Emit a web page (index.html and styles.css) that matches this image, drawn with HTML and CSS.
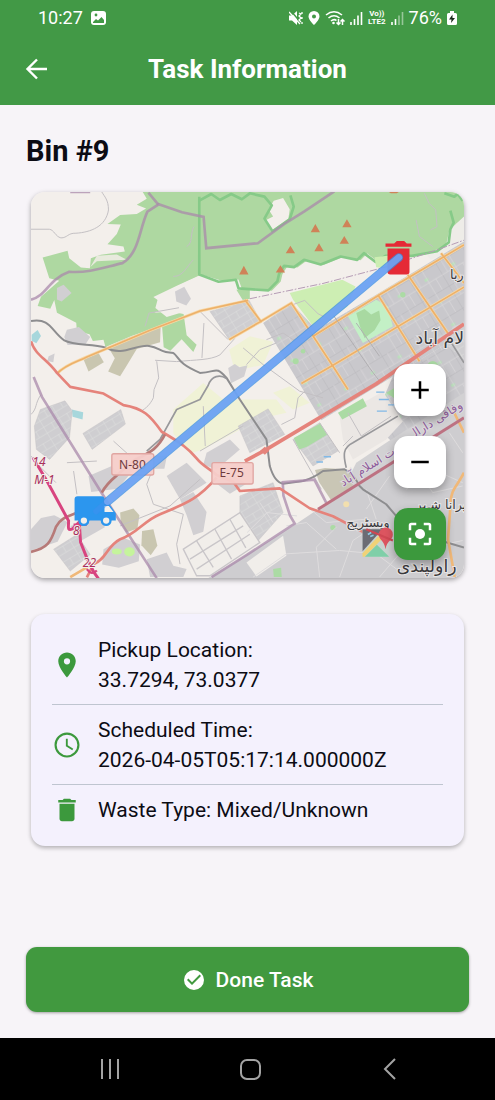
FILE: index.html
```html
<!DOCTYPE html>
<html lang="en">

<head>
    <meta charset="UTF-8">
    <meta name="viewport" content="width=device-width, initial-scale=1.0">
    <title>Task Information</title>
    <link rel="stylesheet" href="styles.css">
</head>

<body>
    <header class="header">
        <div class="status">
            <div class="status__group">
                <span class="status__text">10:27</span>
                <svg class="status__picture" width="15" height="15" viewBox="0 0 15 15">
                    <rect width="15" height="14" rx="3" fill="#fff" />
                    <circle cx="5" cy="4" r="1.4" fill="#429946" />
                    <path d="M2 11l3-3 2 1.5L10.500 6 13 9v3H2z" fill="#429946" />
                </svg>
            </div>
            <div class="status__group status__group--icons">
                <svg width="14" height="14" viewBox="0 0 14 14">
                    <path d="M0 4.500h3L8 0v14L3 9.500H0z" fill="#fff" />
                    <path d="M2 0l11 13" stroke="#429946" stroke-width="1.500" />
                    <path d="M0 1l11 12M10 2l2 1-2 2 2 2-2 2 2 2M13 1v2M13 6v2M13 11v2" fill="none" stroke="#fff" stroke-width="1.300" />
                </svg>
                <svg width="12" height="14" viewBox="0 0 12 14">
                    <path fill="#fff" fill-rule="evenodd" d="M6 0a5.500 5.500 0 0 0-5.500 5.500C.5 9 6 14 6 14s5.500-5 5.500-8.500A5.500 5.500 0 0 0 6 0zm0 3.500a2 2 0 1 1 0 4 2 2 0 0 1 0-4z" />
                </svg>
                <svg width="20" height="16" viewBox="0 0 20 16">
                    <path d="M1 5q8-6.500 16 0M3.500 8q5.500-4.500 11 0M6 11q3-2.500 5.500-.5" fill="none" stroke="#fff" stroke-width="1.600" />
                    <circle cx="8.500" cy="13" r="1.300" fill="#fff" />
                    <path d="M13.500 9v5M11.500 12.500l2 2 2-2M17.500 15v-5M15.500 11.500l2-2 2 2" fill="none" stroke="#fff" stroke-width="1.500" />
                </svg>
                <svg width="13" height="14" viewBox="0 0 13 14">
                    <path d="M1 11v3M4.500 8v6M8 4.500V14M11.500 1v13" stroke="#fff" stroke-width="1.600" />
                </svg>
                <span class="status__lte">Vo))<br>LTE2</span>
                <svg width="13" height="14" viewBox="0 0 13 14">
                    <path d="M1 11v3M4.500 8v6" stroke="#fff" stroke-width="1.600" />
                    <path d="M8 4.500V14M11.500 1v13" stroke="#fff" stroke-opacity=".45" stroke-width="1.600" />
                </svg>
                <span class="status__text">76%</span>
                <svg width="10" height="14" viewBox="0 0 10 14">
                    <path d="M3 0h4v2h1.500A1.500 1.500 0 0 1 10 3.500v9A1.500 1.500 0 0 1 8.500 14h-7A1.500 1.500 0 0 1 0 12.500v-9A1.500 1.500 0 0 1 1.500 2H3z" fill="#fff" />
                    <path d="M5.500 3.500L2 8.500h2.500L4 12l4-5H5.500z" fill="#1c2a1d" />
                </svg>
            </div>
        </div>
        <div class="appbar">
            <button class="appbar__back" type="button" aria-label="Back">
                <svg width="24" height="24" viewBox="0 0 24 24">
                    <path d="M22 12H3M12 2.500L2.500 12l9.500 9.500" fill="none" stroke="#fff" stroke-width="2.400" />
                </svg>
            </button>
            <h1 class="appbar__title">Task Information</h1>
        </div>
    </header>

    <main class="main">
        <h2 class="bin-title">Bin #9</h2>

        <div class="map">
            <svg class="map__canvas" viewBox="32 36 1302 1161" preserveAspectRatio="xMidYMid slice">
                <defs>
                    <pattern id="streets" width="54" height="42" patternUnits="userSpaceOnUse" patternTransform="rotate(-31)">
                        <rect width="54" height="42" fill="#cfced1" />
                        <path d="M0 1h54M1 0v42M28 0v22M0 22h54" fill="none" stroke="#dddbdc" stroke-width="2" />
                    </pattern>
                    <pattern id="sectors" width="94" height="78" patternUnits="userSpaceOnUse" patternTransform="rotate(-31)">
                        <rect width="94" height="78" fill="#c9c8cc" />
                        <rect x="40" y="24" width="12" height="9" fill="#b9dfba" />
                        <path d="M0 1h94M1 0v78" fill="none" stroke="#bbb9bd" stroke-width="2" />
                        <path d="M48 0v78M0 40h94M72 40v38M20 0v40" fill="none" stroke="#d9d7da" stroke-width="2" />
                    </pattern>
                </defs>

                <rect x="30" y="30" width="1310" height="1170" fill="#f3efeb" />

                <!-- fields -->
                <g fill="#f0f2d6">
                    <path d="M628 510l62-40 70 16-30 70-50 10-40-10z" />
                    <path d="M460 690l90-80 60 50 160 0 30 40-80 18-170 92-40 12-50-60z" />
                    <path d="M760 640l50-20 60 50-50 20z" />
                </g>

                <!-- forest and national park -->
                <g fill="#aed8a1">
                    <path d="M368 36l12 20-30 18 28 12-28 16-50 3-38 27 40 2-12 28-28 31 48 7 4 15-72 10-30 10-3 30-27-2-35-28-5-22-75 20 20 62 30 8-55 48-10 28 38 8 12-26 8 38 58 30 2 26 38 9 10 20 32-4 6 22 80-34 90-30 5 65 20 10 34-34 35 38 10-22-30-28-10-70-50 15-34-27 10-38 60-30 70-32 60 18 50-4 10 28 90 6 27-28 5-22 15-24 30 4 30-22 50 14 60-24 50 10 20-20 35 26 30-18 80 0 75-14 35-26 5-40 10-20 38-6V36z" />
                    <path d="M645 330l45 0 0 28-35 4z" />
                </g>
                <path d="M762 62l28-8 20 34-4 28-52 38-18-32 24-12-14-22z" fill="#f3efeb" />
                <path d="M1290 150l44-40v90l-100 40-15-20 60-20z" fill="#eeece8" />
                <path d="M400 352l72-35 66-30 60 18 40-2 12 28 20 32-110 28-58 14-50-10-50 4 40-18z" fill="#f3efeb" />
                <path d="M210 262l20-18 90-4-30-16-60 4z" fill="#e8eadd" />
                <g fill="none" stroke="#86ca88" stroke-width="8" stroke-linejoin="round">
                    <path d="M538 50v234l58 22 52-6 8 26 90 6 27-28 5-22 15-24 30 4 30-22 50 14 60-24 50 10 20-20 35 26 30-18 80 0 75-14 35-26 5-40 10-20-10-36" />
                    <path d="M538 62l36-20 26 18 34-18 32 16 24-18 44 10 22 26-22 40 24 38 52-36 12-38-10-34" />
                    <path d="M1275 40l30 10 10-8 15 20" />
                </g>

                <!-- parks, scrub, water -->
                <path d="M810 340l158-40 40 20-25 60-95 70-30-40-38-50z" fill="#cdeeb3" />
                <path d="M1065 232l45-5-5 40-35-5z" fill="#cdeeb3" />
                <g fill="#c9c6b0">
                    <path d="M310 480l112-42-2 50-70 20-30 50-20 32-36-14 20-40-20-34z" />
                    <path d="M190 540l45-20 16 28-46 28z" />
                    <path d="M300 1000l40-12 18 20-6 40-34 12-16-30z" />
                    <path d="M366 1055l34-5 12 50-20 28-28-30z" />
                </g>
                <path d="M34 465l18-14 10 18-14 22-14-8z" fill="#a7d7dc" />
                <path d="M155 690l34 8-2 22-30-8z" fill="#a7d7dc" />

                <!-- built-up areas -->
                <g fill="#d1cfd2">
                    <path d="M140 450l36-8 34 30-14 22-54 2-10-24z" />
                    <path d="M110 325l20-10 24 25-30 25-14-6z" />
                    <path d="M465 335l28-14 20 36-14 20-30-12z" />
                    <path d="M85 530l18-8-4 26-18-4z" />
                    <path d="M625 565l20-12 14 10 24-6-10 34-40 20z" />
                    <path d="M205 890l70-30 16 20 60-50 90-2-8 40-90 0-50 60-80 10z" />
                    <path d="M32 1050l30-34 40-8 40 20-30 60-80 26z" />
                    <path d="M250 1110l60-34 50 20-4 50-60 20-50-10z" />
                    <path d="M150 1040l90-30 14 34-70 40z" />
                    <path d="M440 890l60-40 60 60-80 50z" />
                    <path d="M480 960l40-22 40 60-10 60-30 10-20-60z" />
                    <path d="M380 1140l60-20 20 40 40 10-10 24H390z" />
                    <path d="M560 820l70-40 30 30-70 60-40-14z" />
                    <path d="M580 905l60-16 40 24-50 30z" />
                </g>
                <g fill="url(#streets)" stroke="#bcb9bd" stroke-width="1">
                    <path d="M570 395l118-33 36 66-96 52z" />
                    <path d="M60 690l74-26 22 30-8 80-60 66-40-30-6-70z" />
                    <path d="M188 762l114-72 14 44-100 76z" />
                    <path d="M655 740l90-52 50 77-105 55z" />
                    <path d="M100 1110l70-44 40 60-60 50z" />
                    <path d="M820 780l80-50 55 85-75 45z" />
                    <path d="M660 950l100-40 30 90-80 90-50 0z" />
                </g>
                <path d="M730 430l85-60 75 80 180-105 264-160v275L905 722z" fill="url(#sectors)" />
                <path d="M1120 590l214-130v200l-214 130-60-60z" fill="url(#sectors)" />
                <path d="M960 710l130-74 60 90-50 54-100 60-30-60z" fill="#ebe7e4" />
                <path d="M1300 440l34-10v110l-50-40z" fill="url(#streets)" />
                <path d="M1010 850l90-60 234-150v90L960 950z" fill="#d2d1d3" />
                <path d="M895 990l130-80 309-190v480H560l260-160z" fill="#cecdd0" />
                <path d="M886 872l30-6 60 4 26 20-4 40-60 38-40-60z" fill="#c9c6b5" />

                <!-- estate of small plots -->
                <path d="M490 1110l170-110 60 90-150 100h-40z" fill="#f1eeea" stroke="#c9c6c9" stroke-width="4" />
                <path d="M510 1140l160-100M530 1170l160-105M530 1085l50 80M585 1050l50 90M630 1020l48 86" fill="none" stroke="#c9c6c9" stroke-width="4" />
                <path d="M680 1150l110-80 10 60-90 62z" fill="#f1eeea" />

                <!-- green spots -->
                <path d="M985 410l85-50 35 20 15 60-90 50z" fill="#c3f0c6" />
                <path d="M1010 400l25-12 20 16 24-12 4 30-18 30-30 24-14-36z" fill="#a8d9a1" />
                <g fill="#abdba4">
                    <path d="M822 776l80-44 20 34-60 36-24 8z" />
                    <path d="M955 700l75-44 12 24-74 40z" />
                    <path d="M1100 640l30-18 30 24-30 14z" />
                    <path d="M760 1170l24-4 2 28h-24z" />
                    <circle cx="828" cy="545" r="9" />
                    <circle cx="850" cy="515" r="7" />
                    <circle cx="1150" cy="345" r="8" />
                    <circle cx="1240" cy="560" r="16" />
                    <circle cx="940" cy="1045" r="8" />
                </g>
                <circle cx="980" cy="975" r="9" fill="#f2dfae" />
                <g fill="#c5f49c">
                    <ellipse cx="290" cy="1117" rx="15" ry="9" />
                    <ellipse cx="328" cy="1118" rx="16" ry="14" />
                </g>
                <g fill="none" stroke="#82b9e6" stroke-width="4">
                    <path d="M1070 638h25M1078 660h30M1106 676h24M1072 695h30M890 848h20M912 832h22" />
                </g>

                <!-- minor roads -->
                <g fill="none" stroke="#c3c0c3" stroke-width="3">
                    <path d="M32 148h55c15 2 18 22 35 26 20 0 20-15 45-14 45-3 90-20 98-70 0-30-12-40-20-54" />
                    <path d="M405 542l65 4c60-6 100-4 130-20l45-50M552 430l-6 105M540 395l85 85M410 545l6 50-14 35-2 25c-10 20-20 30-40 42" />
                    <path d="M670 505l60 50 110 80 70 20M680 555l40-45 50-20" />
                    <path d="M460 290c30 0 40-30 60-50M500 200c20-10 10-40 22-60M375 440l12-40 90-16" />
                    <path d="M1215 40l14 30 20 20 4 50-20 10M1190 120l10 50 40 30" />
                    <path d="M32 705c20-20 10-30 30-60M32 830l25 30 50 50M140 850l90-5M280 785l50 45M160 875l10 70" />
                    <path d="M400 865l-20 50 20 60 90 30-20 90 10 60M300 1040l150-60 90-80M550 680l6 120M540 815l130-76" />
                    <path d="M785 735l40-20 10-60 20-20M820 780l85 150M900 730l60 90M985 700l40 70 90-60M1000 770l-30 30" />
                    <path d="M805 380l50-18 40 40 40 20M740 480l50-20 30 20 60-10M900 520l60 90" />
                </g>
                <g fill="none" stroke="#dedcdd" stroke-width="3">
                    <path d="M700 1194l100-70 160-10 110 10 80 60M800 1040l60-10 90 80M860 980l60 50 120-10M960 1194l40-110 60-40M900 1194l-10-90 60-60M1040 930l30 90M1110 890l-70 100M1160 930l80-60 90 40M1180 850l60 90 90-20M1250 800l20 110M1080 1194l60-70 190-40M1290 760l40 60" />
                    <path d="M682 1060l60-60 90 10M720 970l40 60" />
                </g>

                <!-- railways and administrative borders -->
                <path d="M32 424c60-10 60 30 100 58 30 16 80 10 125 22 50 28 90-10 130-5 35 5 30 20 73 21 20 15 10 30 80 60 50 0 45-25 80 15l40 65 80 120 10 80q15 50 40 53l60-8q30-8 60-30l65-5q25 10 45 50l10 10 70 45 30 35M1270 1086l64 19" fill="none" stroke="#8d8d8f" stroke-width="6" stroke-linejoin="round" />
                <path d="M620 597c-20-14-45-8-55 20l-25 43-70 30-50 90-40 35" fill="none" stroke="#98989b" stroke-width="5" stroke-linejoin="round" />
                <path d="M980 865c-10-40-10-60 20-75l135-80M1290 480l44 70" fill="none" stroke="#98989b" stroke-width="5" />
                <path d="M690 357l220-46 190-50 150-50 84-30" fill="none" stroke="#b59cb5" stroke-width="3" stroke-dasharray="22 5 5 5" />
                <g fill="none" stroke="#a98aab" stroke-width="8" stroke-opacity=".75">
                    <path d="M32 360c50-15 50-60 115-84 60 4 100-12 160-26 50-30 50-100 75-155l34-22 70 24 65 14 8 94 155-15 80-58 60-38 90-60" />
                    <path d="M385 38l30 36M150 36h60" />
                    <path d="M40 592l25 60 180 290 165 255" />
                    <path d="M575 1194l105-66 145-95-14-24-20-60-2-40 95-8 36 70" />
                </g>

                <!-- main roads -->
                <g fill="none" stroke="#f7d9a6" stroke-width="9">
                    <path d="M110 582c30-30 60-35 90-50l190-80 150-58 145-32M628 480l90-52 97-58 125 190 45 70M675 360l50 68" />
                    <path d="M880 470l200-125 254-150M845 612l95-55 394-235M1075 345l125 200M1165 285l120 175M1265 220l69 90" />
                </g>
                <g fill="none" stroke="#edb06a" stroke-width="5">
                    <path d="M110 582c30-30 60-35 90-50l190-80 150-58 145-32M628 480l90-52 97-58 125 190 45 70M675 360l50 68" />
                    <path d="M880 470l200-125 254-150M845 612l95-55 394-235M1075 345l125 200M1165 285l120 175M1265 220l69 90" />
                </g>
                <path d="M1300 690l34 70M1334 880c-20 40-40 50-40 90l-8 110 20 114M150 1194l60-35" fill="none" stroke="#f0b878" stroke-width="8" />
                <path d="M940 405l110 160 30 40M1010 430l70 100" fill="none" stroke="#b1afb2" stroke-width="3" />
                <g fill="none" stroke="#e5837b" stroke-width="11" stroke-linejoin="round">
                    <path d="M32 485c15 45 45 50 78 95l40 42 100 20 60 35c60 10 80 30 115 80 60 35 80 50 105 80 20 25 40 30 60 50l50 20 20 28 120-8 90 60 70 24 130 68" stroke-width="8" />
                    <path d="M675 845l60-32 335-200 264-180" />
                    <path d="M590 895c-60 70-100 80-170 110-50 20-70 60-120 75-40 20-40 60-80 75l-20 40" stroke-width="8" />
                </g>
                <path d="M735 802l14 12-14 12-14-12z" fill="#e5837b" />
                <path d="M895 990l439-275" fill="none" stroke="#bd7282" stroke-width="9" />
                <path d="M32 1118c50-10 60-30 75-75 20-40 60-30 90-60M245 940c20-40 50-50 80-85 40-30 80-30 110-90" fill="none" stroke="#b77a78" stroke-width="8" />
                <path d="M38 835l42 70 65 120c0 20-5 30 12 24l20-20 4 60 20 50 20 40 14 20" fill="none" stroke="#d8447f" stroke-width="9" />
                <path d="M200 1170q14 20 30 4M160 1036h40" fill="none" stroke="#d8447f" stroke-width="7" />

                <!-- peaks -->
                <g fill="#cf8258">
                    <path d="M672 258l14 26h-28zM782 256l14 22h-28zM812 198l14 22h-28zM887 132l14 25h-28zM898 190l14 24h-28zM974 168l14 24h-28zM982 118l14 24h-28zM1108 36h30l-6 4h-18z" />
                </g>

                <!-- road shields -->
                <g fill="#f6cdca" fill-opacity=".95" stroke="#e0a5a1" stroke-width="4">
                    <rect x="275" y="823" width="126" height="64" rx="6" />
                    <rect x="576" y="850" width="124" height="64" rx="6" />
                </g>
                <g class="map__shield">
                    <text x="297" y="868">N-80</text>
                    <text x="599" y="894">E-75</text>
                </g>
                <g class="map__exit">
                    <text x="36" y="860">14</text>
                    <text x="42" y="914">M-1</text>
                    <text x="158" y="1066">8</text>
                    <text x="188" y="1164">22</text>
                </g>

                <!-- place names -->
                <text class="map__area" x="970" y="922" transform="rotate(-32 970 922)">ت اسلام آباد</text>
                <text class="map__area" x="1180" y="778" transform="rotate(-32 1180 778)">وفاقی دارالـ</text>
                <text class="map__place" x="1292" y="298">ربا</text>
                <text class="map__place map__place--big" x="1188" y="492">لام آباد</text>
                <text class="map__place" x="1188" y="988">پرانا شہر</text>
                <text class="map__place" x="980" y="1042">ویسٹریج</text>

                <!-- attribution mark -->
                <g>
                    <path d="M1029 1050h80v83h-80z" fill="#c9d3cf" />
                    <path d="M1029 1050h60l-60 66z" fill="#6c6c74" />
                    <path d="M1029 1122l50-54 10 10-54 55h-6z" fill="#f0d276" />
                    <path d="M1036 1133l36-36 37 36z" fill="#7fcfa8" />
                    <path d="M1098 1110c-4-28-20-26-20-44a20 20 0 0 1 42 0c0 18-18 18-22 44z" fill="#dc5560" />
                    <path d="M1040 1050l80 34" stroke="#cf4853" stroke-width="6" />
                    <path d="M1045 1066l10-6M1052 1072l10-4" stroke="#91cbe5" stroke-width="5" />
                </g>
                <text class="map__place map__place--big" x="1132" y="1178">راولپندی</text>

                <!-- bin marker -->
                <path d="M1098 191h26l8-8h22l8 8h14v10h-78zM1104 206h66v70q0 8-8 8h-50q-8 0-8-8z" fill="#e52a36" />
                <!-- truck marker -->
                <g>
                    <path d="M172 951h72q9 0 9 9v14h14l20 28v22h-14a16 16 0 0 1-30 0h-36a16 16 0 0 1-32 0h-12V960q0-9 9-9z" fill="#2c96ee" />
                    <path d="M253 980h13l14 18h-27z" fill="#f3efeb" />
                    <circle cx="191" cy="1024" r="13" fill="#f3efeb" stroke="#2c96ee" stroke-width="7" />
                    <circle cx="258" cy="1024" r="13" fill="#f3efeb" stroke="#2c96ee" stroke-width="7" />
                </g>
                <!-- route -->
                <g fill="none" stroke-linecap="round">
                    <path d="M228 996L256 972" stroke="#3f8ff0" stroke-width="18" stroke-opacity=".5" />
                    <path d="M262 967L1138 233" stroke="#3a8de4" stroke-width="26" stroke-opacity=".75" />
                    <path d="M262 967L1138 233" stroke="#76a6f6" stroke-width="20" stroke-opacity=".8" />
                </g>
            </svg>

            <div class="map__controls">
                <button class="map__btn" type="button" aria-label="Zoom in">
                    <svg width="30" height="30" viewBox="0 0 24 24">
                        <path d="M19 13h-6v6h-2v-6H5v-2h6V5h2v6h6z" />
                    </svg>
                </button>
                <button class="map__btn" type="button" aria-label="Zoom out">
                    <svg width="30" height="30" viewBox="0 0 24 24">
                        <path d="M5 11h14v2H5z" />
                    </svg>
                </button>
                <button class="map__btn map__btn--center" type="button" aria-label="Center map">
                    <svg width="30" height="30" viewBox="0 0 24 24" fill="#fff">
                        <path d="M5 15H3v4a2 2 0 0 0 2 2h4v-2H5zM5 5h4V3H5a2 2 0 0 0-2 2v4h2zM19 3h-4v2h4v4h2V5a2 2 0 0 0-2-2zM19 19h-4v2h4a2 2 0 0 0 2-2v-4h-2z" />
                        <circle cx="12" cy="12" r="4" />
                    </svg>
                </button>
            </div>
        </div>

        <div class="info">
            <div class="info__item">
                <svg class="info__icon" viewBox="0 0 24 24">
                    <path d="M12 2C8.130 2 5 5.130 5 9c0 5.250 7 13 7 13s7-7.750 7-13c0-3.870-3.130-7-7-7zm0 9.500a2.500 2.500 0 0 1 0-5 2.500 2.500 0 0 1 0 5z" />
                </svg>
                <div class="info__text">Pickup Location:<br>33.7294, 73.0377</div>
            </div>
            <div class="info__item">
                <svg class="info__icon" viewBox="0 0 24 24">
                    <path d="M11.990 2C6.470 2 2 6.480 2 12s4.470 10 9.990 10C17.520 22 22 17.520 22 12S17.520 2 11.990 2zM12 20.300a8.300 8.300 0 1 1 0-16.600 8.300 8.300 0 0 1 0 16.600zM12.600 7H11.100v6l5.100 3.200.8-1.300-4.400-2.700z" />
                </svg>
                <div class="info__text">Scheduled Time:<br>2026-04-05T05:17:14.000000Z</div>
            </div>
            <div class="info__item">
                <svg class="info__icon" viewBox="0 0 24 24">
                    <path d="M6 19c0 1.100.9 2 2 2h8c1.100 0 2-.9 2-2V7H6zM19 4h-3.500l-1-1h-5l-1 1H5v2h14z" />
                </svg>
                <div class="info__text">Waste Type: Mixed/Unknown</div>
            </div>
        </div>

        <button class="done" type="button">
            <svg width="24" height="24" viewBox="0 0 24 24" fill="#fff">
                <path d="M12 2a10 10 0 1 0 0 20 10 10 0 0 0 0-20zm-2 15l-5-5 1.410-1.410L10 14.170l7.590-7.590L19 8z" />
            </svg>
            Done Task
        </button>
    </main>

    <nav class="navbar">
        <button class="navbar__btn" type="button" aria-label="Recent apps">
            <svg width="24" height="24" viewBox="0 0 24 24">
                <path d="M4 2v20M12 2v20M20 2v20" />
            </svg>
        </button>
        <button class="navbar__btn" type="button" aria-label="Home">
            <svg width="24" height="24" viewBox="0 0 24 24">
                <rect x="3" y="3" width="19" height="19" rx="6" />
            </svg>
        </button>
        <button class="navbar__btn" type="button" aria-label="Back">
            <svg width="24" height="24" viewBox="0 0 24 24">
                <path d="M17 2L7 12l10 10" />
            </svg>
        </button>
    </nav>
</body>

</html>
```
FILE: styles.css
```css
* {
    box-sizing: border-box;
}

body {
    margin: 0;
    min-height: 100vh;
    display: flex;
    flex-direction: column;
    background: #f7f4f8;
    color: #0c0c14;
    font-family: Roboto, "Liberation Sans", sans-serif;
}

button {
    padding: 0;
    border: 0;
    background: none;
    font-family: inherit;
    cursor: pointer;
}

svg {
    display: block;
}

/* header */
.header {
    background: #429946;
    color: #fff;
}

.status {
    height: 36px;
    padding: 0 38px;
    display: flex;
    align-items: center;
    justify-content: space-between;
}

.status__group {
    display: flex;
    align-items: center;
    gap: 8px;
}

.status__group--icons {
    gap: 5px;
}

.status__text {
    font-size: 18px;
    line-height: 24px;
}

.status__lte {
    font-size: 8px;
    line-height: 8px;
    font-weight: 700;
    text-align: center;
}

.appbar {
    padding: 17px 25px 20px;
    display: grid;
    grid-template-columns: 24px 1fr 24px;
    align-items: center;
}

.appbar__title {
    margin: 0;
    font-size: 26px;
    line-height: 32px;
    font-weight: 700;
    text-align: center;
}

/* content */
.main {
    flex: 1;
    padding: 30px 26px 26px;
    display: flex;
    flex-direction: column;
}

.bin-title {
    margin: 0 0 25px;
    font-size: 29px;
    line-height: 32px;
    font-weight: 700;
}

/* map */
.map {
    position: relative;
    margin: 0 5px 36px;
    border-radius: 14px;
    overflow: hidden;
    box-shadow: 0 2px 5px rgba(0, 0, 0, .35);
}

.map__canvas {
    width: 100%;
    height: auto;
}

.map__controls {
    position: absolute;
    right: 18px;
    bottom: 18px;
    display: flex;
    flex-direction: column;
    gap: 20px;
}

.map__btn {
    width: 52px;
    height: 52px;
    display: flex;
    align-items: center;
    justify-content: center;
    border-radius: 14px;
    background: #fff;
    box-shadow: 0 4px 8px rgba(0, 0, 0, .3);
}

.map__btn--center {
    background: #3c993d;
}

.map__shield {
    font: 36px "Noto Sans", sans-serif;
    fill: #6e3a3c;
}

.map__exit {
    font: italic 36px "Noto Sans", sans-serif;
    fill: #a82f5c;
    stroke: #f3efeb;
    stroke-width: 6px;
    paint-order: stroke;
}

.map__place {
    font: 38px "DejaVu Sans", sans-serif;
    fill: #3a393c;
    stroke: #e8e6e6;
    stroke-width: 6px;
    paint-order: stroke;
}

.map__place--big {
    font-size: 52px;
}

.map__area {
    font: 36px "DejaVu Sans", sans-serif;
    fill: #8f5f9c;
    stroke: #e0dde0;
    stroke-width: 5px;
    paint-order: stroke;
}

/* info */
.info {
    margin: 0 5px 36px;
    padding: 21px;
    border-radius: 14px;
    background: #f4f1fd;
    box-shadow: 0 2px 4px rgba(0, 0, 0, .28);
}

.info__item {
    padding-bottom: 9px;
    display: flex;
    align-items: center;
    gap: 16px;
    border-bottom: 1px solid #bfc5d0;
}

.info__item + .info__item {
    padding-top: 10px;
}

.info__item:last-child {
    padding-bottom: 0;
    border-bottom: 0;
}

.info__icon {
    flex: none;
    width: 30px;
    height: 30px;
    fill: #3c993d;
}

.info__text {
    font-size: 21px;
    line-height: 30px;
}

/* done */
.done {
    height: 65px;
    margin-top: auto;
    display: flex;
    align-items: center;
    justify-content: center;
    gap: 10px;
    border-radius: 11px;
    background: #41993f;
    color: #fff;
    font-size: 21px;
    font-weight: 500;
    box-shadow: 0 1px 3px rgba(0, 0, 0, .35);
}

/* navbar */
.navbar {
    height: 62px;
    padding: 0 7% 0 8%;
    display: flex;
    background: #000;
}

.navbar__btn {
    flex: 1;
    display: flex;
    align-items: center;
    justify-content: center;
}

.navbar__btn svg {
    fill: none;
    stroke: #a3a3a3;
    stroke-width: 2;
}
```
